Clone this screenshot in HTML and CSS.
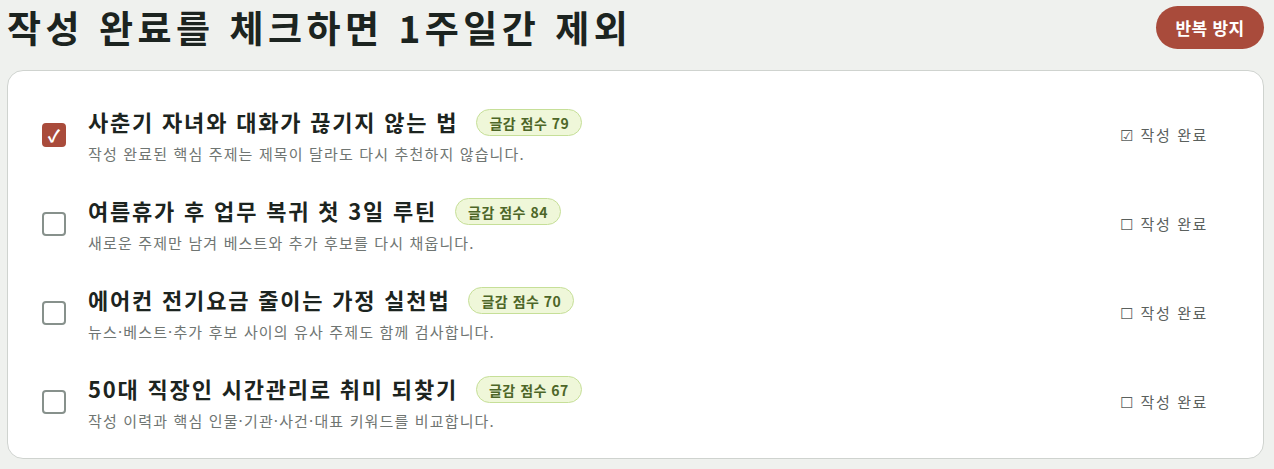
FILE: index.html
```html
<!DOCTYPE html>
<html lang="ko">
<head>
<meta charset="utf-8">
<link rel="stylesheet" href="styles.css">
</head>
<body>
<header class="top">
  <h1 class="page-title">작성 완료를 체크하면 1주일간 제외</h1>
  <button class="pill-btn">반복 방지</button>
</header>
<section class="card">
  <div class="row">
    <span class="box checked">✓</span>
    <div class="content">
      <div class="title-line"><span class="title">사춘기 자녀와 대화가 끊기지 않는 법</span><span class="score">글감 점수 79</span></div>
      <div class="desc">작성 완료된 핵심 주제는 제목이 달라도 다시 추천하지 않습니다.</div>
    </div>
    <span class="done">☑ 작성 완료</span>
  </div>
  <div class="row">
    <span class="box"></span>
    <div class="content">
      <div class="title-line"><span class="title">여름휴가 후 업무 복귀 첫 3일 루틴</span><span class="score">글감 점수 84</span></div>
      <div class="desc">새로운 주제만 남겨 베스트와 추가 후보를 다시 채웁니다.</div>
    </div>
    <span class="done">☐ 작성 완료</span>
  </div>
  <div class="row">
    <span class="box"></span>
    <div class="content">
      <div class="title-line"><span class="title">에어컨 전기요금 줄이는 가정 실천법</span><span class="score">글감 점수 70</span></div>
      <div class="desc">뉴스·베스트·추가 후보 사이의 유사 주제도 함께 검사합니다.</div>
    </div>
    <span class="done">☐ 작성 완료</span>
  </div>
  <div class="row">
    <span class="box"></span>
    <div class="content">
      <div class="title-line"><span class="title">50대 직장인 시간관리로 취미 되찾기</span><span class="score">글감 점수 67</span></div>
      <div class="desc">작성 이력과 핵심 인물·기관·사건·대표 키워드를 비교합니다.</div>
    </div>
    <span class="done">☐ 작성 완료</span>
  </div>
</section>
</body>
</html>
```

FILE: styles.css
```css
* { box-sizing: border-box; }
body {
  margin: 0;
  padding: 6px 10px 0 7px;
  background: #eff1ee;
  font-family: "Noto Sans CJK KR", "Noto Sans", sans-serif;
  color: #1f2723;
}
.top {
  display: flex;
  justify-content: space-between;
  align-items: center;
  height: 43px;
  margin-bottom: 21px;
}
.page-title {
  margin: 0;
  font-size: 37px;
  font-weight: 700;
  line-height: 43px;
  letter-spacing: 4.5px;
  color: #1c2420;
}
.pill-btn {
  height: 43px;
  width: 108px;
  padding: 0;
  border: none;
  border-radius: 22px;
  background: #a94b3b;
  color: #fff;
  font-family: inherit;
  font-size: 17px;
  font-weight: 700;
  letter-spacing: 0.3px;
}
.card {
  background: #fff;
  border: 1px solid #cfd3cf;
  border-radius: 16px;
  padding: 19px 55px 12px 34px;
}
.row {
  display: flex;
  align-items: center;
  height: 89px;
}
.box {
  width: 24px;
  height: 24px;
  border: 2px solid #87918c;
  border-radius: 4px;
  flex: none;
  display: flex;
  align-items: center;
  justify-content: center;
  color: #fff;
  font-size: 17px;
  font-weight: 700;
}
.box.checked {
  background: #a94b3b;
  border-color: #a94b3b;
}
.content {
  flex: 1;
  margin-left: 22px;
  display: flex;
  flex-direction: column;
  gap: 8px;
}
.title-line {
  display: flex;
  align-items: center;
  gap: 18px;
  height: 30px;
}
.title {
  font-size: 22px;
  font-weight: 700;
  letter-spacing: 1.8px;
  color: #1c2420;
}
.score {
  display: inline-flex;
  align-items: center;
  height: 27px;
  padding: 0 12px;
  margin-top: 4px;
  border: 1px solid #c6df98;
  border-radius: 14px;
  background: #eff7d9;
  color: #4d6628;
  font-size: 14px;
  font-weight: 700;
  letter-spacing: 0.5px;
}
.desc {
  font-size: 15px;
  color: #6f7572;
  line-height: 20px;
  letter-spacing: 1.15px;
}
.done {
  font-size: 15px;
  color: #5a605d;
  letter-spacing: 1.6px;
  flex: none;
}
```
